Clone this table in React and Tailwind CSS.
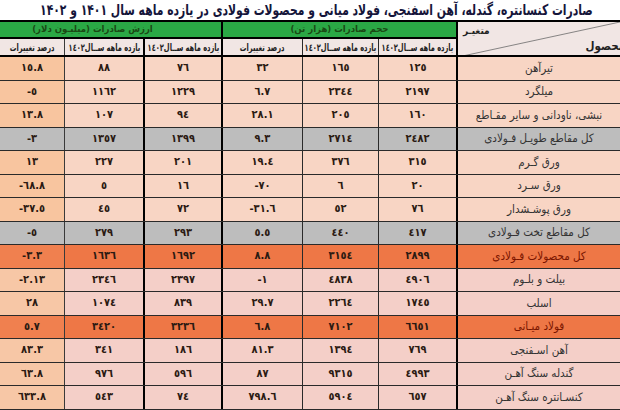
import React from "react";

const toAr = (s) => String(s).replace(/[0-9]/g, (d) => "٠١٢٣٤٥٦٧٨٩"[d]);

const rows = [
  ["15.8", "88", "76", "32", "165", "125", "تیرآهن", "n"],
  ["-5", "1162", "1229", "6.7", "2344", "2197", "میلگرد", "n"],
  ["13.8", "107", "94", "28.1", "205", "160", "نبشی، ناودانی و سایر مقـاطع", "n"],
  ["-3", "1357", "1399", "9.3", "2714", "2482", "کل مقاطع طویـل فـولادی", "g"],
  ["13", "227", "201", "19.4", "376", "315", "ورق گـرم", "n"],
  ["-68.8", "5", "16", "-70", "6", "20", "ورق سـرد", "n"],
  ["-37.5", "45", "72", "-31.6", "52", "76", "ورق پوشـشدار", "n"],
  ["-5", "279", "293", "5.5", "440", "417", "کل مقاطع تخت فـولادی", "g"],
  ["-3.3", "1636", "1692", "8.8", "3154", "2899", "کل محصولات فـولادی", "o"],
  ["-2.13", "2346", "2397", "-1", "4838", "4906", "بیلت و بلـوم", "p"],
  ["28", "1074", "839", "29.7", "2264", "1745", "اسلب", "p"],
  ["5.7", "3420", "3236", "6.8", "7102", "6651", "فولاد میـانی", "o"],
  ["83.3", "341", "186", "81.3", "1394", "769", "آهن اسـفنجی", "p"],
  ["63.8", "976", "596", "87", "9315", "4993", "گندله سنگ آهـن", "p"],
  ["633.8", "543", "74", "798.6", "5904", "657", "کنسـانتره سنگ آهـن", "p"],
];

const widths = ["w-[65px]", "w-[80px]", "w-[78px]", "w-[80px]", "w-[76px]", "w-[79px]", "w-[162px]"];
const rightBorders = [
  "border-r border-r-[#3a3a3a]",
  "border-r-2 border-r-black",
  "border-r-2 border-r-black",
  "border-r border-r-[#2a2a2a]",
  "border-r border-r-[#2a2a2a]",
  "border-r-2 border-r-black",
  "",
];

function rowBg(type, i) {
  if (type === "g") return "bg-[#bdbdbd]";
  if (type === "o") return i === 0 ? "bg-[#f0804f]" : "bg-[#ee7746]";
  if (type === "p") return i === 0 ? "bg-[#f7c7a6]" : "bg-[#f4cfc8]";
  return i === 0 ? "bg-[#f8c59f]" : "bg-[#f8d5c4]";
}

function Row({ r }) {
  const type = r[7];
  return (
    <div className="flex h-[23.5px] border-b border-b-[#2a2a2a]">
      {r.slice(0, 7).map((v, i) => (
        <div
          key={i}
          className={`${widths[i]} ${rightBorders[i]} ${rowBg(type, i)} shrink-0 flex items-center justify-center`}
        >
          {i < 6 ? (
            <span dir="ltr" className="text-[11px] font-bold text-[#2b1a12]">
              {toAr(v)}
            </span>
          ) : (
            <span
              dir="rtl"
              className={`text-[11.5px] ${type === "o" ? "text-[#7a1500]" : "text-[#333]"}`}
            >
              {v}
            </span>
          )}
        </div>
      ))}
    </div>
  );
}

const sub = "یازده ماهه ســال" + "١٤٠٢";

export default function App() {
  return (
    <div
      className="w-[620px] h-[410px] bg-white overflow-hidden"
      style={{ fontFamily: '"DejaVu Sans Condensed", "DejaVu Sans", sans-serif' }}
    >
      <div dir="rtl" className="h-[20px] flex items-center justify-center pl-[12px]">
        <span className="inline-block text-[15px] font-bold text-[#15153a] whitespace-nowrap leading-none scale-x-[0.8]">
          صادرات کنسانتره، گندله، آهن اسفنجی، فولاد میانی و محصولات فولادی در یازده ماهه سال ۱۴۰۱ و ۱۴۰۲
        </span>
      </div>

      <div className="flex border-t-2 border-t-black border-b-2 border-b-black">
        <div className="flex flex-col w-[458px] shrink-0">
          <div className="flex h-[17px] border-b-2 border-b-black">
            <div className="w-[223px] shrink-0 bg-[#2aa845] border-r-2 border-r-black flex items-center justify-center pr-[36px]">
              <span dir="rtl" className="text-[9.5px] font-bold text-[#1a4a14]">ارزش صادرات (میلیـون دلار)</span>
            </div>
            <div className="w-[235px] shrink-0 bg-[#2aa845] border-r-2 border-r-black flex items-center justify-center">
              <span dir="rtl" className="text-[9.5px] font-bold text-[#1a4a14]">حجم صادرات (هزار تن)</span>
            </div>
          </div>
          <div className="flex h-[16px] bg-[#f1e6e4]">
            {["درصد  تغییرات", sub, sub, "درصد  تغییرات", sub, sub].map((t, i) => (
              <div
                key={i}
                className={`${widths[i]} ${rightBorders[i]} shrink-0 flex items-center justify-center overflow-hidden`}
              >
                <span dir="rtl" className="inline-block text-[10px] font-bold text-[#222] whitespace-nowrap scale-x-[0.74]">
                  {t}
                </span>
              </div>
            ))}
          </div>
        </div>
        <div className="relative w-[162px] shrink-0 bg-[#f1e6e4] overflow-hidden">
          <svg className="absolute inset-0" width="162" height="35" viewBox="0 0 162 35" preserveAspectRatio="none">
            <line x1="0" y1="35" x2="162" y2="0" stroke="#6b6b6b" strokeWidth="0.8" />
          </svg>
          <div className="absolute left-[5px] top-[1px] text-[10px] font-bold text-[#222]" dir="rtl">
            متغیـر
          </div>
          <div className="absolute right-[-5px] bottom-[0px] text-[11.5px] font-bold text-[#222]" dir="rtl">
            محصول
          </div>
        </div>
      </div>

      {rows.map((r, i) => (
        <Row key={i} r={r} />
      ))}
    </div>
  );
}
